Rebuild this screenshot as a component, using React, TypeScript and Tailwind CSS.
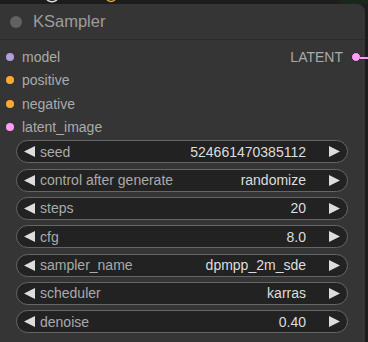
import React from "react";

const inputs = [
  { name: "model", color: "#b39ddb" },
  { name: "positive", color: "#ffa931" },
  { name: "negative", color: "#ffa931" },
  { name: "latent_image", color: "#ff9cf9" },
];

const widgets = [
  { label: "seed", value: "524661470385112" },
  { label: "control after generate", value: "randomize" },
  { label: "steps", value: "20" },
  { label: "cfg", value: "8.0" },
  { label: "sampler_name", value: "dpmpp_2m_sde" },
  { label: "scheduler", value: "karras" },
  { label: "denoise", value: "0.40" },
];

function Arrow({ dir }: { dir: "l" | "r" }) {
  return (
    <svg width="11" height="11" viewBox="0 0 11 11" className="shrink-0">
      {dir === "l" ? (
        <polygon points="11,0 0,5.5 11,11" fill="#dddddd" />
      ) : (
        <polygon points="0,0 11,5.5 0,11" fill="#dddddd" />
      )}
    </svg>
  );
}

export default function App() {
  return (
    <div className="relative w-[368px] h-[342px] overflow-hidden bg-[#1d1d1d] font-['Liberation_Sans',Arial,sans-serif]">
      <svg className="absolute left-0 top-0" width="368" height="6" viewBox="0 0 368 6">
        <path d="M47 0 Q52 3.5 57 0" stroke="#e0e0e0" strokeWidth="1.5" fill="none" />
        <path d="M107 0 Q111 3 115 0" stroke="#e89a30" strokeWidth="1.5" fill="none" />
        <rect x="340" y="0" width="28" height="4" fill="#1b261b" />
      </svg>
      <div className="relative mt-[4px] w-[365px] h-[360px] bg-[#353535] rounded-tr-[8px]">
        {/* title */}
        <div className="flex h-[36px] items-center border-b border-[#2c2c2c] pl-[10px]">
          <div className="h-[12px] w-[12px] rounded-full bg-[#616161]" />
          <span className="ml-[11px] text-[16.5px] text-[#9d9d9d] leading-none">KSampler</span>
        </div>
        {/* slots */}
        <div className="relative pt-[5.5px]">
          {inputs.map((s) => (
            <div key={s.name} className="flex h-[23.33px] items-center pl-[6px]">
              <div className="h-[8px] w-[8px] rounded-full" style={{ backgroundColor: s.color }} />
              <span className="ml-[8px] text-[14px] text-[#aaaaaa] leading-none">{s.name}</span>
            </div>
          ))}
          <div className="absolute right-[4px] top-[5.5px] flex h-[23.33px] items-center">
            <span className="text-[14px] text-[#aaaaaa] leading-none">LATENT</span>
            <div className="ml-[8px] h-[10px] w-[10px] rounded-full border border-[#222] bg-[#ff9cf9]" />
          </div>
        </div>
        {/* widgets */}
        <div className="mt-[1.5px] flex flex-col gap-[5.33px] pl-[16px] pr-[17px]">
          {widgets.map((w) => (
            <div
              key={w.label}
              className="flex h-[23px] items-center rounded-full border border-[#666666] bg-[#222222] pl-[7px] pr-[7px] text-[14px] leading-none"
            >
              <Arrow dir="l" />
              <span className="ml-[5px] text-[#aaaaaa]">{w.label}</span>
              <span className="ml-auto text-[#dddddd]">{w.value}</span>
              <span className="ml-[23px] flex">
                <Arrow dir="r" />
              </span>
            </div>
          ))}
        </div>
      </div>
      <div className="absolute left-[360px] top-[56.5px] h-[2px] w-[8px] bg-[#ff9cf9]" />
    </div>
  );
}
